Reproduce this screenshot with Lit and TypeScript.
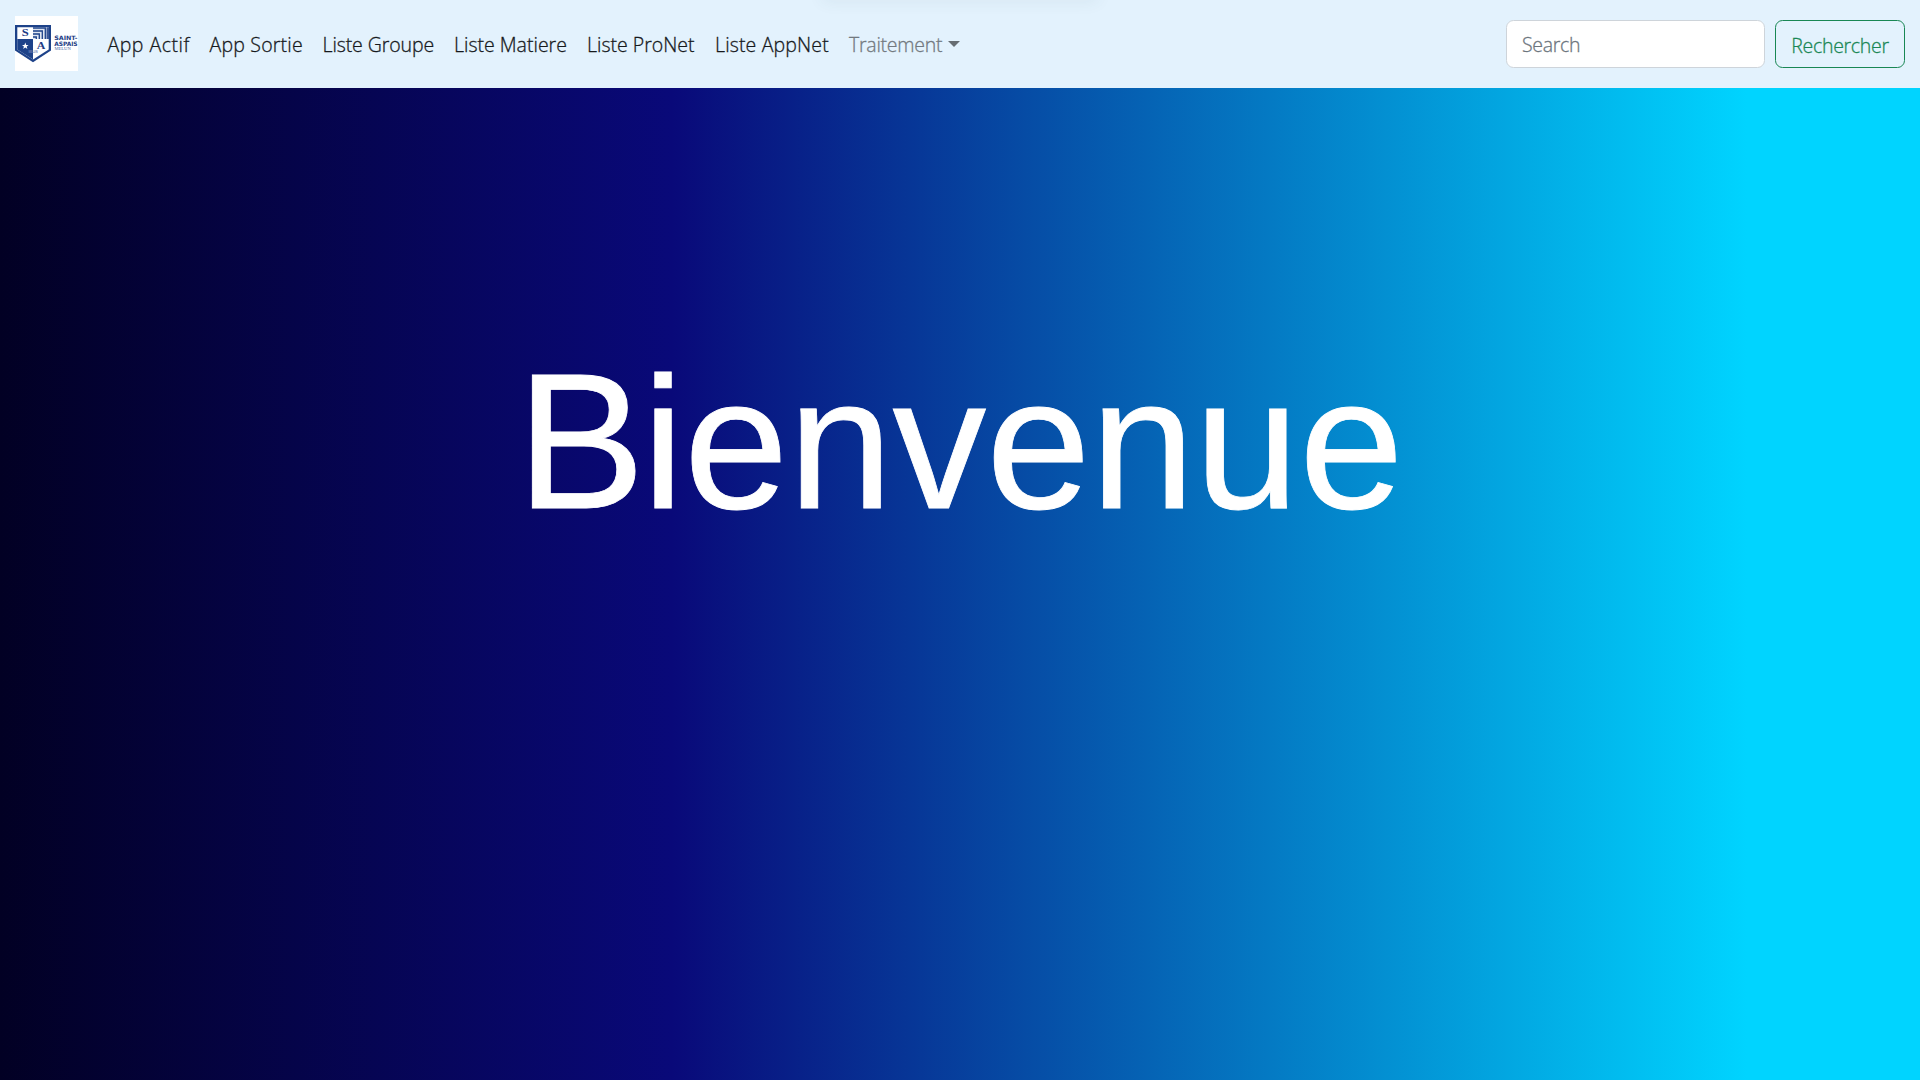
import { LitElement, html, css, svg } from "lit";
import { customElement } from "lit/decorators.js";

const LINKS = [
  { label: "App Actif", cls: "actif" },
  { label: "App Sortie", cls: "sortie" },
  { label: "Liste Groupe", cls: "groupe" },
  { label: "Liste Matiere", cls: "matiere" },
  { label: "Liste ProNet", cls: "pronet" },
  { label: "Liste AppNet", cls: "appnet" },
];

@customElement("school-logo")
class SchoolLogo extends LitElement {
  static styles = css`
    :host { display: block; width: 63px; height: 55px; -webkit-text-stroke: 0; letter-spacing: 0; }
    .logo { display: block; background: #fff; overflow: visible; }
    .letter { font: bold 9.5px "Liberation Serif", serif; }
    .name { font: bold 6px "DejaVu Sans", sans-serif; fill: #1d3c85; }
    .city { font: 4.8px "Liberation Serif", serif; fill: #4b66a5; }
    .tiny { font: bold 2.6px "Liberation Sans", sans-serif; fill: #6b80b5; }
  `;

  render() {
    return html`<svg class="logo" width="63" height="55" viewBox="0 0 63 55">
      <path d="M0 9H36V34.5L18 46.3L0 34.5Z" fill="#1d4289" />
      <path d="M2.3 11.2H33.7V33.4L18 43.6L2.3 33.4Z" fill="#fff" />
      <path d="M2.3 23H18V43.6L2.3 33.4Z" fill="#1d4289" />
      <path d="M18 11.2H33.7V23H18Z" fill="#dfe5f1" />
      ${[0, 1, 2, 3].map((i) => svg`<path
        d="M18 ${12 + i * 3}H${30.3 - i * 3}V23" fill="none" stroke="#1d4289" stroke-width="1.3" />`)}
      <path d="M31.5 11.2H34V23H31.5Z" fill="#3b5898" />
      <text class="letter" x="6.7" y="20.3" fill="#1d3c85" textLength="7" lengthAdjust="spacingAndGlyphs">S</text>
      <text class="letter" x="21.7" y="33" fill="#1d3c85" textLength="8.6" lengthAdjust="spacingAndGlyphs">A</text>
      <path d="M10.3 26.6L11.2 29L13.6 29.1L11.7 30.6L12.4 33L10.3 31.6L8.2 33L8.9 30.6L7 29.1L9.4 29Z" fill="#fff" />
      <text class="tiny" x="13.5" y="37.3" textLength="9" lengthAdjust="spacingAndGlyphs">MELUN</text>
      <text class="name" x="39.2" y="24" textLength="23.2" lengthAdjust="spacingAndGlyphs">SAINT-</text>
      <text class="name" x="39.2" y="29.7" textLength="23.4" lengthAdjust="spacingAndGlyphs">ASPAIS</text>
      <text class="city" x="39.4" y="34.4" textLength="16.4" lengthAdjust="spacingAndGlyphs">MELUN</text>
    </svg>`;
  }
}

@customElement("app-root")
class AppRoot extends LitElement {
  static styles = css`
    :host {
      display: flex;
      flex-direction: column;
      height: 100vh;
      overflow: hidden;
      position: relative;
      font-family: "Open Sans", "Noto Sans", sans-serif;
      font-size: 19.5px;
      font-weight: 300;
      line-height: 30px;
      -webkit-text-stroke: 0.3px;
      background: linear-gradient(90deg, #020024 0%, #090979 35%, #00d4ff 91%);
    }
    *, *::before, *::after { box-sizing: border-box; }
    .bar {
      flex: none;
      display: flex;
      align-items: center;
      height: 88px;
      padding: 0 15px;
      background: #e3f2fd;
    }
    .brand { margin: 0 19.5px 1px 0; }
    .links { display: flex; flex: 1; margin: 2px 0 0; padding: 0; list-style: none; }
    .link { padding: 10px; white-space: nowrap; color: #16191c; }
    .actif { width: 102px; letter-spacing: 0.5px; }
    .sortie { width: 113px; letter-spacing: 0.2px; }
    .groupe { width: 131.5px; letter-spacing: -0.1px; }
    .matiere { width: 133px; }
    .pronet { width: 128px; }
    .appnet { width: 134px; letter-spacing: 0.15px; }
    .drop { display: flex; align-items: center; color: #72797f; letter-spacing: -0.25px; }
    .caret {
      margin-left: 6px;
      margin-top: -3px;
      border: 6px solid transparent;
      border-top-color: #666d72;
      border-bottom: 0;
    }
    .search { display: flex; gap: 10px; }
    .field {
      width: 259px;
      height: 48px;
      padding: 1px 15px 0;
      border: 1px solid #ced4da;
      border-radius: 7.5px;
      background: #fff;
      font: inherit;
      letter-spacing: -0.3px;
    }
    .field::placeholder { color: #6c757d; opacity: 1; }
    .submit {
      width: 130px;
      height: 48px;
      padding: 3px 0 0;
      border: 1px solid #198754;
      border-radius: 7.5px;
      background: transparent;
      color: #198754;
      font: inherit;
      letter-spacing: -0.3px;
    }
    .title {
      margin: 248px 0 0;
      color: #fff;
      font: 400 187.5px/215px "Liberation Sans", Arial, sans-serif;
      text-align: center;
      -webkit-text-stroke: 0.8px #fff;
    }
    .title::first-letter { font-size: 193px; letter-spacing: -3px; line-height: 1; }
    .glow {
      position: absolute;
      top: -10px;
      left: 826px;
      width: 268px;
      height: 8px;
      box-shadow: 0 0 16px 4px rgba(60, 80, 100, 0.07);
    }
  `;

  render() {
    return html`
      <nav class="bar">
        <school-logo class="brand"></school-logo>
        <ul class="links">
          ${LINKS.map((l) => html`<li class="link ${l.cls}">${l.label}</li>`)}
          <li class="link drop">Traitement<span class="caret"></span></li>
        </ul>
        <form class="search">
          <input class="field" type="search" placeholder="Search" />
          <button class="submit" type="button">Rechercher</button>
        </form>
      </nav>
      <h1 class="title">Bienvenue</h1>
      <div class="glow"></div>
    `;
  }
}
